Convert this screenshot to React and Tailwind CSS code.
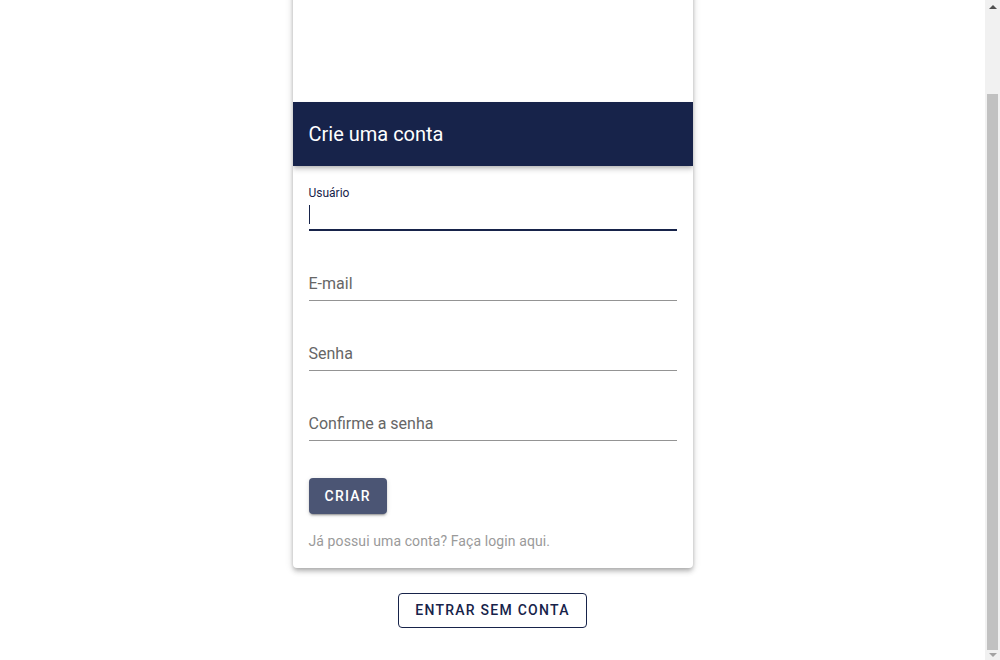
import React, { useEffect, useRef } from 'react';

const Field = ({ label, focused }) => {
    return (
        <div className="relative h-12">
            <label
                className={
                    focused
                        ? 'absolute left-0 top-[2px] text-[12px] leading-[17px] text-[#17234a]'
                        : 'absolute left-0 top-[19px] text-[16px] leading-[23px] text-[#666666]'
                }
            >
                {label}
            </label>
            <div className="absolute left-0 right-0 bottom-0 h-8 border-b border-[#949494]">
                {focused && <span className="absolute left-0 top-[6px] h-[19px] w-px bg-[#17234a]"></span>}
            </div>
            {focused && <div className="absolute left-0 right-0 bottom-0 h-[2px] bg-[#17234a]"></div>}
        </div>
    );
};

const Scrollbar = () => (
    <div className="w-[15px] h-full bg-[#f1f1f1] flex flex-col shrink-0">
        <div className="h-[14px] flex items-center justify-center">
            <div className="w-0 h-0 border-l-[4px] border-r-[4px] border-b-[4px] border-l-transparent border-r-transparent border-b-[#505050]"></div>
        </div>
        <div className="h-[80px]"></div>
        <div className="h-[556px] mx-[2px] bg-[#c1c1c1]"></div>
        <div className="flex-1 flex items-center justify-center">
            <div className="w-0 h-0 border-l-[4px] border-r-[4px] border-t-[4px] border-l-transparent border-r-transparent border-t-[#a3a3a3]"></div>
        </div>
    </div>
);

export default function App() {
    const pageRef = useRef(null);

    useEffect(() => {
        if (pageRef.current) pageRef.current.scrollTop = pageRef.current.scrollHeight;
    }, []);

    return (
        <div className="h-[660px] flex overflow-hidden bg-white font-['Roboto','Liberation_Sans',sans-serif]">
            <div ref={pageRef} className="flex-1 h-full overflow-hidden">
                <div className="flex flex-col items-center pt-8 pb-8">
                    <div className="w-[400px] bg-white rounded shadow-[0_2px_4px_-1px_rgba(0,0,0,0.2),0_4px_5px_0_rgba(0,0,0,0.14),0_1px_10px_0_rgba(0,0,0,0.12)] overflow-hidden">
                        <div className="h-[166px] bg-white"></div>
                        <div className="relative z-10 h-16 bg-[#17234a] px-4 flex items-center shadow-[0_2px_4px_-1px_rgba(0,0,0,0.2),0_4px_5px_0_rgba(0,0,0,0.14)]">
                            <h1 className="text-[20px] text-white leading-none">Crie uma conta</h1>
                        </div>
                        <div className="px-4 pt-[17px] pb-[17px] flex flex-col">
                            <div className="flex flex-col gap-[22px]">
                                <Field label="Usuário" focused />
                                <Field label="E-mail" />
                                <Field label="Senha" />
                                <Field label="Confirme a senha" />
                            </div>
                            <div className="mt-[37px]">
                                <button className="h-9 px-4 rounded bg-[#4b5574] text-white text-[14px] font-medium tracking-[1.25px] uppercase shadow-[0_3px_1px_-2px_rgba(0,0,0,0.2),0_2px_2px_0_rgba(0,0,0,0.14),0_1px_5px_0_rgba(0,0,0,0.12)]">
                                    Criar
                                </button>
                            </div>
                            <p className="mt-[17px] text-[14px] leading-5 tracking-[0.1px] text-[#9a9a9a]">Já possui uma conta? Faça login aqui.</p>
                        </div>
                    </div>
                    <button className="mt-[25px] h-[35px] px-4 rounded border border-[#17234a] text-[#17234a] text-[14px] font-medium tracking-[1.25px] uppercase">
                        Entrar sem conta
                    </button>
                </div>
            </div>
            <Scrollbar />
        </div>
    );
}
